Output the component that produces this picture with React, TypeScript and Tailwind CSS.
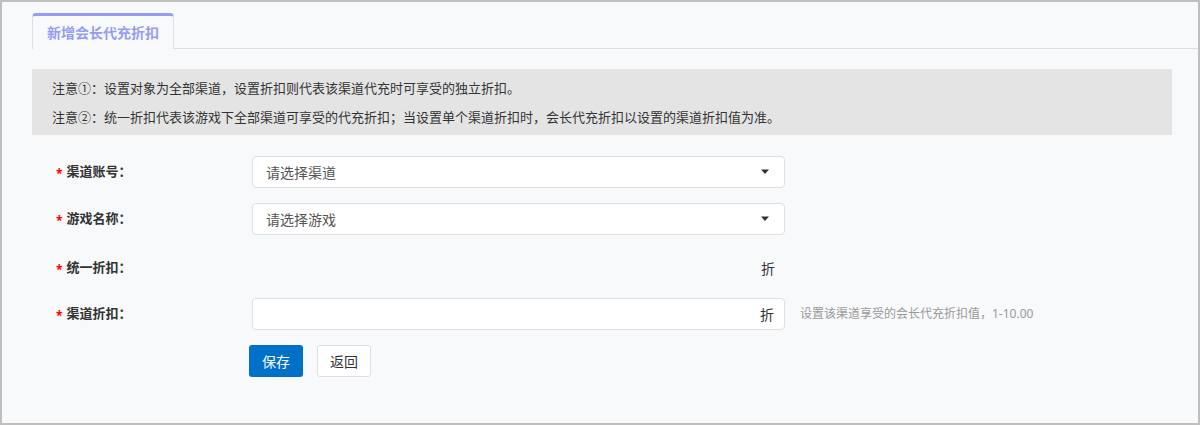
import React from "react";

const font = { fontFamily: '"Noto Sans", "Noto Sans CJK SC", sans-serif' };

function Caret() {
  return (
    <svg width="10" height="6" viewBox="0 0 10 6" className="block">
      <path d="M1 0.5 L9 0.5 L5 5 Z" fill="#333" />
    </svg>
  );
}

function Label({ text }: { text: string }) {
  return (
    <div className="w-[200px] shrink-0 flex items-center pl-[4px] text-[13px] font-bold text-[#333]">
      <span className="text-[#f00] mr-[4px] text-[12px] leading-none mt-[3px]">*</span>
      <span>{text}：</span>
    </div>
  );
}

function Select({ placeholder }: { placeholder: string }) {
  return (
    <div className="w-[533px] h-[32px] bg-white border border-[#dcdfe6] rounded-[4px] flex items-center justify-between pl-[13px] pr-[14px]">
      <span className="text-[14px] text-[#555]">{placeholder}</span>
      <Caret />
    </div>
  );
}

export default function App() {
  return (
    <div
      className="w-[1200px] h-[425px] bg-[#f8f9fb] border-2 border-[#bfbfbf] overflow-hidden"
      style={font}
    >
      <div className="pt-[11px] pl-[30px]">
        <div className="flex items-end">
          <div className="h-[36px] px-[14px] border-t-[3px] border-t-[#959cf4] border-x border-x-[#dcdfe6] rounded-t-[4px] flex items-center text-[14px] font-bold text-[#959cf4]">
            新增会长代充折扣
          </div>
          <div className="flex-1 border-b border-[#dcdfe6]" />
        </div>

        <div className="mt-[20px] w-[1140px] bg-[#e4e4e4] pt-[5px] pb-[3px] pl-[20px] text-[13px] leading-[29px] text-[#333]">
          <div>注意①：设置对象为全部渠道，设置折扣则代表该渠道代充时可享受的独立折扣。</div>
          <div>注意②：统一折扣代表该游戏下全部渠道可享受的代充折扣；当设置单个渠道折扣时，会长代充折扣以设置的渠道折扣值为准。</div>
        </div>

        <div className="pl-[20px] mt-[21px]">
          <div className="flex items-center h-[32px]">
            <Label text="渠道账号" />
            <Select placeholder="请选择渠道" />
          </div>
          <div className="flex items-center h-[32px] mt-[15px]">
            <Label text="游戏名称" />
            <Select placeholder="请选择游戏" />
          </div>
          <div className="flex items-center h-[32px] mt-[17px]">
            <Label text="统一折扣" />
            <div className="w-[533px] flex justify-end pr-[10px] text-[14px] text-[#333]">折</div>
          </div>
          <div className="flex items-center h-[32px] mt-[14px]">
            <Label text="渠道折扣" />
            <div className="w-[533px] h-[32px] bg-white border border-[#dcdfe6] rounded-[4px] flex items-center justify-end pr-[10px] text-[14px] text-[#333]">
              折
            </div>
            <div className="ml-[15px] text-[12px] text-[#999]">设置该渠道享受的会长代充折扣值，1-10.00</div>
          </div>
          <div className="flex items-center mt-[15px] ml-[197px] gap-[14px]">
            <button className="w-[54px] h-[32px] bg-[#0070c9] rounded-[3px] text-white text-[14px]">保存</button>
            <button className="w-[54px] h-[32px] bg-white border border-[#dcdfe6] rounded-[3px] text-[#333] text-[14px]">返回</button>
          </div>
        </div>
      </div>
    </div>
  );
}
